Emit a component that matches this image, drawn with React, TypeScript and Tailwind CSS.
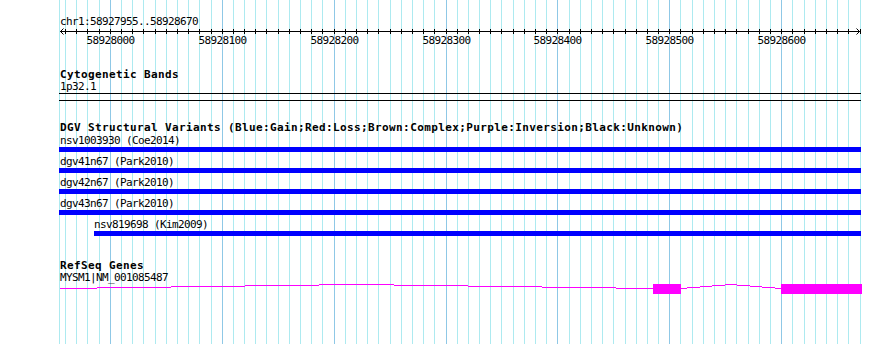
import React from "react";

const START = 58927955;
const END = 58928670;
const xOf = (bp: number) => 60 + ((bp - START) * 800) / 715;

type Line = { x: number; major: boolean };
const gridLines: Line[] = (() => {
  const arr: Line[] = [{ x: 59, major: false }];
  for (let bp = 58927960; bp <= END; bp += 10) {
    arr.push({ x: Math.floor(xOf(bp)), major: bp % 100 === 0 });
  }
  return arr;
})();

const majors: number[] = [];
for (let bp = 58928000; bp <= END; bp += 100) majors.push(bp);

type Run = { x: number; w: number; y: number };
function hat(x0: number, x1: number, yBase: number, yPeak: number): Run[] {
  const runs: Run[] = [];
  const mid = (x0 + x1) / 2;
  const half = (x1 - x0) / 2;
  let cur: Run | null = null;
  for (let x = x0; x < x1; x++) {
    const y = Math.round(yBase - (yBase - yPeak) * (1 - Math.abs(x + 0.5 - mid) / half));
    if (cur && cur.y === y) {
      cur.w += 1;
    } else {
      cur = { x, w: 1, y };
      runs.push(cur);
    }
  }
  return runs;
}

const intronRuns = [...hat(60, 653, 4, 0), ...hat(681, 781, 4, 0)];

const txt =
  "font-['DejaVu_Sans_Mono',monospace] text-[11px] leading-[13px] tracking-[-0.62px] text-black whitespace-pre";
const title =
  "font-['DejaVu_Sans_Mono',monospace] font-bold text-[11px] leading-[11px] tracking-[0.38px] text-black whitespace-pre";

function Grid() {
  return (
    <svg className="absolute left-0 top-0" width={890} height={344} shapeRendering="crispEdges">
      {gridLines.map((l, i) => (
        <rect key={i} x={l.x} y={0} width={1} height={344} fill={l.major ? "#8fc8e6" : "#adeaf0"} />
      ))}
    </svg>
  );
}

function Ruler() {
  return (
    <svg width={890} height={20} className="block overflow-visible">
      <g shapeRendering="crispEdges">
        <rect x={60} y={3} width={800} height={1} fill="#000" />
        {gridLines.slice(1).map((l, i) => (
          <rect key={i} x={l.x} y={1} width={1} height={5} fill="#000" />
        ))}
      </g>
      <path d="M63.5,0.5 L60.5,3.5 L63.5,6.5" stroke="#000" strokeWidth={1} fill="none" />
      <path d="M856.5,0.5 L859.5,3.5 L856.5,6.5" stroke="#000" strokeWidth={1} fill="none" />
      {majors.map((bp) => (
        <text
          key={bp}
          x={Math.floor(xOf(bp)) + 0.5}
          y={16}
          textAnchor="middle"
          fontFamily="'DejaVu Sans Mono', monospace"
          fontSize={11}
          letterSpacing={-0.62}
          fill="#000"
        >
          {bp}
        </text>
      ))}
    </svg>
  );
}

function Variant({ label, indent }: { label: string; indent?: boolean }) {
  return (
    <div className={indent ? "pl-[34px]" : ""}>
      <div className={txt}>{label}</div>
      <div className={indent ? "h-[5px] w-[767px] bg-[#0000ff]" : "-ml-px h-[5px] w-[802px] bg-[#0000ff]"} />
    </div>
  );
}

function Gene() {
  return (
    <svg width={890} height={10} className="block overflow-visible" shapeRendering="crispEdges">
      {intronRuns.map((r, i) => (
        <rect key={i} x={r.x} y={r.y} width={r.w} height={1} fill="#ff00ff" />
      ))}
      <rect x={653} y={0} width={28} height={10} fill="#ff00ff" />
      <rect x={781} y={0} width={81} height={10} fill="#ff00ff" />
    </svg>
  );
}

export default function App() {
  return (
    <div className="relative h-[344px] w-[890px] overflow-hidden bg-white">
      <Grid />
      <div className="relative flex flex-col">
        <div className={`mt-[15px] pl-[60px] ${txt}`}>chr1:58927955..58928670</div>
        <Ruler />

        <div className="mt-[21px] flex flex-col pl-[60px]">
          <div className={title}>Cytogenetic Bands</div>
          <div className={txt}>1p32.1</div>
          <div className="-ml-px h-px w-[802px] bg-black" />
          <div className="-ml-px mt-[6px] h-px w-[802px] bg-black" />
        </div>

        <div className="mt-[21px] flex flex-col pl-[60px]">
          <div className={title}>
            DGV Structural Variants (Blue:Gain;Red:Loss;Brown:Complex;Purple:Inversion;Black:Unknown)
          </div>
          <div className="mt-px flex flex-col gap-[3px]">
            <Variant label="nsv1003930 (Coe2014)" />
            <Variant label="dgv41n67 (Park2010)" />
            <Variant label="dgv42n67 (Park2010)" />
            <Variant label="dgv43n67 (Park2010)" />
            <Variant label="nsv819698 (Kim2009)" indent />
          </div>
        </div>

        <div className="mt-[24px] flex flex-col pl-[60px]">
          <div className={title}>RefSeq Genes</div>
          <div className={txt}>MYSM1|NM_001085487</div>
        </div>
        <Gene />
      </div>
    </div>
  );
}
